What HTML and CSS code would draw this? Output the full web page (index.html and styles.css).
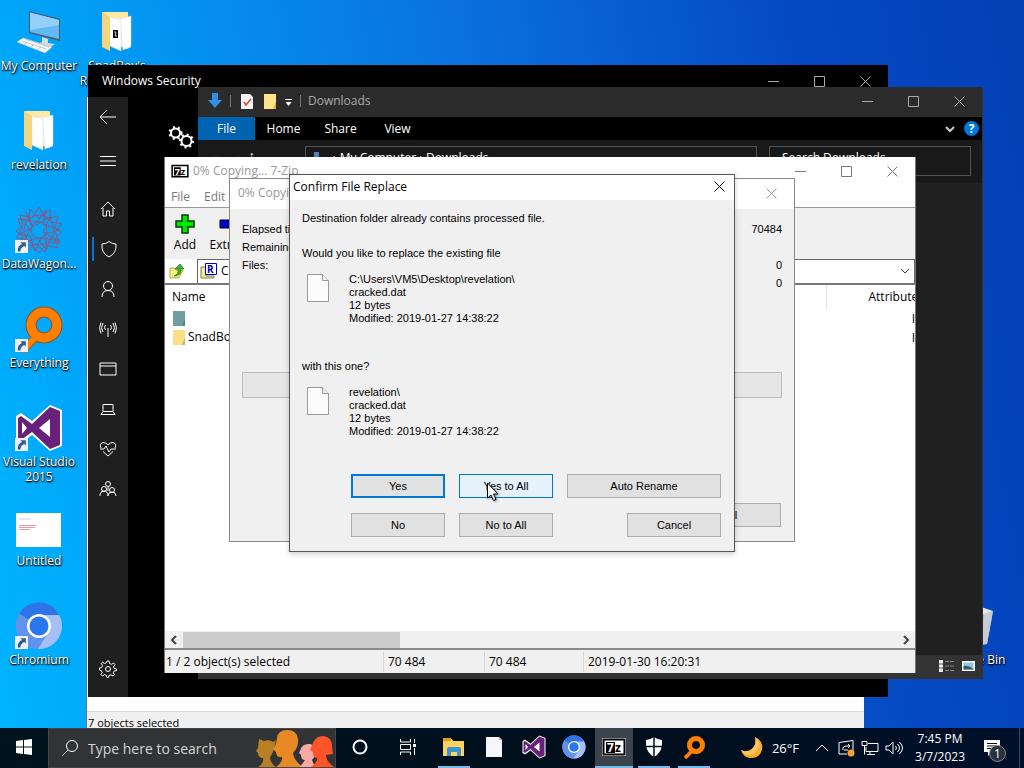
FILE: index.html
```html
<!DOCTYPE html>
<html lang="en">
<head>
  <meta charset="UTF-8">
  <title>Desktop</title>
  <link rel="stylesheet" href="styles.css">
</head>
<body>
  <!-- shared icons -->
  <svg class="defs" aria-hidden="true">
    <symbol id="folder" viewBox="0 0 48 48">
      <path d="M9 4h26v33H17z" fill="#ffe9a2"/>
      <path d="M23 10h15v29l-4 2-11-4z" fill="#f4f4f0"/>
      <path d="M27 11l11-3v30l-8 4z" fill="#fff" stroke="#d5dade" stroke-width=".5"/>
      <path d="M17 9l11 3v31l-11-5z" fill="#fff" stroke="#d5dade" stroke-width=".5"/>
      <path d="M9 4l8 5v34l-8-4z" fill="#f3d480"/>
    </symbol>
    <symbol id="chromium" viewBox="0 0 48 48">
      <circle cx="24" cy="24" r="23" fill="#9db8f4"/>
      <path d="M24 24L4 12A23 23 0 0 1 44 12.500z" fill="#2e74e6"/>
      <path d="M4 12A23 23 0 0 0 23 47L34 30 24 24z" fill="#5f93ee"/>
      <path d="M24 13h20A23 23 0 0 1 23 47l11-17z" fill="#a6bff6"/>
      <circle cx="24" cy="24" r="12" fill="#fff"/>
      <circle cx="24" cy="24" r="9.500" fill="#2877ee"/>
    </symbol>
    <symbol id="vs" viewBox="0 0 48 48">
      <path d="M35 1l12 5v36l-12 5-18-16-11 8-5-3V12l5-3 11 8z" fill="#fff"/>
      <path d="M35 3l10 4v34l-10 4-18-17L6 36l-3-2V14l3-2 11 8zM35 15L24 24l11 9zM7 18v12l5-6z" fill="#68217a" fill-rule="evenodd"/>
    </symbol>
    <symbol id="everything" viewBox="0 0 48 48">
      <path d="M20 32L6 46" stroke="#b85a08" stroke-width="8"/>
      <circle cx="28" cy="20" r="13" fill="none" stroke="#8a5420" stroke-width="11"/>
      <path d="M20 32L6 46" stroke="#ff8000" stroke-width="6"/>
      <circle cx="28" cy="20" r="13" fill="none" stroke="#ff8000" stroke-width="9"/>
    </symbol>
    <symbol id="sevenzip" viewBox="0 0 24 18">
      <path d="M0 0h24v18H0z" fill="#fff"/>
      <path d="M1.500 1.500h21v15h-21z" fill="#fff" stroke="#000" stroke-width="2"/>
      <path d="M4 4h9v11H4z"/>
      <text x="5" y="14" font-size="12" font-weight="bold" fill="#fff">7</text>
      <text x="13" y="14" font-size="12" font-weight="bold">z</text>
    </symbol>
    <symbol id="shortcut" viewBox="0 0 12 12">
      <path d="M0 0h12v12H0z" fill="#eef1f6"/>
      <path d="M5 2h5v5L8.500 5.500Q5 7 5 10.500H2.500Q2.500 5 6.500 3.700z" fill="#345a95"/>
    </symbol>
    <symbol id="file" viewBox="0 0 22 28">
      <path d="M.5.5h15l6 6v21H.5z" fill="#fcfcfc" stroke="#999"/>
      <path d="M15.500.5v6h6" fill="#f0f0f0" stroke="#999"/>
    </symbol>
    <symbol id="min" viewBox="0 0 11 11"><path d="M0 5.500h11" stroke="currentColor"/></symbol>
    <symbol id="max" viewBox="0 0 11 11"><path d="M.5.5h10v10H.5z" fill="none" stroke="currentColor"/></symbol>
    <symbol id="close" viewBox="0 0 11 11"><path d="M.5.5l10 10M10.500.5l-10 10" stroke="currentColor"/></symbol>
    <symbol id="smallfolder" viewBox="0 0 14 17">
      <path d="M1 1h12v15H1z" fill="currentColor"/><path d="M13 8v8h-3z" fill="#0003"/>
    </symbol>
  </svg>

  <main class="desktop">
    <div class="icons">
      <a class="icon" href="#">
        <svg viewBox="0 0 48 48">
          <path d="M14 3l31 8v22L14 25z" fill="#4a5a68"/>
          <path d="M15 4.500l29 7.500v19L15 24z" fill="#63b9f4"/>
          <path d="M15 4.500l29 7.500v5L15 22z" fill="#93d0fb"/>
          <path d="M27 29l6 2v4l7 1-6 4-11-4 4-2z" fill="#d3dde5"/>
          <path d="M8 30l29 9-7 6L2 34z" fill="#f4f6f8" stroke="#b8c6d0" stroke-width=".7"/>
          <path d="M7 33l24 8M11 31l23 8M12 34l-3 3M19 36l-3 3M26 39l-4 3" stroke="#a9b8c4" stroke-width=".7"/>
        </svg>
        <span>My Computer</span>
      </a>
      <a class="icon" href="#">
        <svg><use href="#folder"/></svg>
        <span>revelation</span>
      </a>
      <a class="icon" href="#">
        <svg viewBox="0 0 48 48">
          <g fill="none" stroke="#8f5580" stroke-width="1">
            <path d="M24 1l7 12 12-3-3 12 7 4-7 7 3 9-12-3-7 8-7-8-12 3 3-12-7-5 7-5-3-11 12 3z"/>
            <path d="M15 3l9 9 11-8 1 12 11 2-7 8 5 11-11-1-4 10-9-8-9 7-2-12-9-1 6-9-4-10 11 1z"/>
            <path d="M11 6l7 15 17-10-7 15 16 9-18-3-6 13-5-15-11-2 13-6zM31 4l-3 14 17 6-15 4 2 16-10-12-15 6 8-14L7 13l15 3z"/>
            <circle cx="24" cy="24" r="8"/><circle cx="24" cy="24" r="15"/>
          </g>
          <use href="#shortcut" y="34" width="13" height="13"/>
        </svg>
        <span>DataWagon...</span>
      </a>
      <a class="icon" href="#">
        <svg viewBox="0 0 48 48"><use href="#everything" x="1"/><use href="#shortcut" y="34" width="13" height="13"/></svg>
        <span>Everything</span>
      </a>
      <a class="icon" href="#">
        <svg viewBox="0 0 48 48"><use href="#vs"/><use href="#shortcut" y="34" width="13" height="13"/></svg>
        <span>Visual Studio 2015</span>
      </a>
      <a class="icon" href="#">
        <svg viewBox="0 0 48 48">
          <path d="M1 10h45v34H1z" fill="#fff"/>
          <path d="M4 16h12" stroke="#bccbe8" stroke-width=".8"/>
          <path d="M4 22.500h17M4 24.500h16M4 26.500h11" stroke="#e8808a" stroke-width=".8"/>
        </svg>
        <span>Untitled</span>
      </a>
      <a class="icon" href="#">
        <svg viewBox="0 0 48 48"><use href="#chromium"/><use href="#shortcut" y="34" width="13" height="13"/></svg>
        <span>Chromium</span>
      </a>
      <a class="icon" href="#">
        <svg viewBox="0 0 48 48">
          <use href="#folder"/><path d="M20 22h5v8h-5z"/><path d="M21 24h2l-1 4h2" stroke="#fff" fill="none" stroke-width=".8"/>
        </svg>
        <span>SnadBoy's Revelation v2</span>
      </a>
    </div>

    <a class="icon recycle" href="#">
      <svg viewBox="0 0 48 48">
        <path d="M6 6l37 3-6 33-25 1z" fill="#aeb8c6"/>
        <path d="M7 6l18-3 18 6-9 3z" fill="#e4e9ee"/>
        <path d="M34 12l9-3-6 33-5 1z" fill="#c6ccd4"/>
      </svg>
      <span>Recycle Bin</span>
    </a>

    <section class="window folder-window">
      <footer>7 objects selected</footer>
    </section>

    <section class="window security">
      <header class="titlebar">
        <span class="title">Windows Security</span>
        <button aria-label="Minimize"><svg><use href="#min"/></svg></button>
        <button aria-label="Maximize"><svg><use href="#max"/></svg></button>
        <button aria-label="Close"><svg><use href="#close"/></svg></button>
      </header>
      <div class="security-body">
        <nav>
          <button class="back" aria-label="Back"><svg viewBox="0 0 18 18"><path d="M17 9H1M8 2L1 9l7 7"/></svg></button>
          <button class="hamburger" aria-label="Menu"><svg viewBox="0 0 18 18"><path d="M1 4.500h16M1 9h16M1 13.500h16"/></svg></button>
          <button class="home" aria-label="Home"><svg viewBox="0 0 18 18"><path d="M2 9l7-7 7 7M4 7.500V16h3.500v-5h3v5H14V7.500"/></svg></button>
          <button class="current" aria-label="Virus protection"><svg viewBox="0 0 18 18"><path d="M9 1.500q3 2.500 7 2.500 1 9-7 13Q1 13 2 4q4 0 7-2.500z"/></svg></button>
          <button aria-label="Account"><svg viewBox="0 0 18 18"><circle cx="9" cy="6" r="4.500"/><path d="M3 17q0-6.500 6-6.500t6 6.500"/></svg></button>
          <button aria-label="Firewall"><svg viewBox="0 0 18 18"><path d="M9 8v9M6.500 10q-2-2.500 0-5M11.500 10q2-2.500 0-5M4 12q-3-4 0-9M14 12q3-4 0-9M2 13.500q-3-6 0-11M16 13.500q3-6 0-11"/></svg></button>
          <button aria-label="App control"><svg viewBox="0 0 18 18"><path d="M1 3h16v12H1zM1 6h16"/></svg></button>
          <button aria-label="Device security"><svg viewBox="0 0 18 18"><path d="M4 4.500h10v7H4zM4 11.500l-2 3h14l-2-3"/></svg></button>
          <button aria-label="Device health"><svg viewBox="0 0 18 18"><path d="M2 8Q0 3 4.500 2.500 7 2.500 9 5q2-2.500 4.500-2.500Q18 3 16 8M1 9h4l2-3 3 6 2-3h5M4 11.500L9 16l5-4.500"/></svg></button>
          <button aria-label="Family"><svg viewBox="0 0 18 18"><circle cx="9" cy="4" r="2.500"/><circle cx="5" cy="9" r="2.500"/><circle cx="13" cy="10" r="2.500"/><path d="M1 16q0-5 4-5t4 5M9 16q0-4 4-4t4 4M9 7v4"/></svg></button>
          <button class="settings" aria-label="Settings"><svg viewBox="0 0 18 18"><circle cx="9" cy="9" r="2.500"/><path d="M8 1h2l.5 2.500 2 .8L14.500 3 16 4.500 14.500 7l.8 1.500L17.500 9v1.500l-2.500.7-.7 1.500L15.500 15 14 16l-2-1.200-2 .7-.5 2H8l-.7-2.200-1.800-.7L3.500 16 2 14.500l1.200-2-.7-1.800L.5 10V8l2.200-.5.8-1.800L2.200 3.500 3.500 2.200 5.700 3.500l1.800-.8z"/></svg></button>
        </nav>
        <svg class="gears" viewBox="0 0 26 24">
          <circle cx="7.500" cy="8" r="4.500"/><circle cx="7.500" cy="8" r="6" class="teeth"/>
          <circle cx="18.500" cy="16" r="5"/><circle cx="18.500" cy="16" r="6.500" class="teeth"/>
        </svg>
      </div>
    </section>

    <section class="window downloads">
      <header class="titlebar">
        <svg class="quick" viewBox="0 0 104 18">
          <path d="M8 1h6v7h4l-7 8-7-8h4z" fill="#2f8fe0"/>
          <path d="M26.500 3v12M96.500 3v12" stroke="#777"/>
          <path d="M37 2h9l3 3v12H37z" fill="#f4f4f4"/><path d="M40 10l2 3 5-6" stroke="#d04a30" fill="none" stroke-width="1.500"/>
          <path d="M60 2h12v15H60z" fill="#ffe38a"/><path d="M72 10v7h-3z" fill="#d9b24c"/>
          <path d="M81 7.500h7" stroke="#fff"/><path d="M81.500 10h6l-3 4z" fill="#fff"/>
        </svg>
        <span class="title">Downloads</span>
        <button aria-label="Minimize"><svg><use href="#min"/></svg></button>
        <button aria-label="Maximize"><svg><use href="#max"/></svg></button>
        <button aria-label="Close"><svg><use href="#close"/></svg></button>
      </header>
      <nav class="tabs">
        <button class="selected">File</button>
        <button>Home</button>
        <button>Share</button>
        <button>View</button>
        <svg class="chevron" viewBox="0 0 10 10"><path d="M1 3l4 4 4-4"/></svg>
        <button class="help" aria-label="Help">?</button>
      </nav>
      <div class="address">
        <span class="arrows">←&nbsp; →&nbsp; ↑</span>
        <div class="path"><i></i>&rsaquo; My Computer &rsaquo; Downloads</div>
        <div class="find">Search Downloads</div>
      </div>
      <footer>
        <svg viewBox="0 0 40 16">
          <path d="M2 2h4v12H2z" fill="#eee"/><path d="M2 6h4M2 10h4" stroke="#555"/>
          <path d="M8 3.500h4M13 3.500h4M8 8h4M13 8h4M8 12.500h4M13 12.500h4" stroke="#888"/>
          <path d="M25 3h13v10H25z" fill="#fff"/><path d="M26.500 4.500h10v7h-10z" fill="#8fc4e8"/><path d="M26.500 8q4-1 10 3v.5h-10z" fill="#35604f"/>
        </svg>
      </footer>
    </section>

    <section class="window zip">
      <header class="titlebar">
        <svg class="logo"><use href="#sevenzip"/></svg>
        <span class="title">0% Copying... 7-Zip</span>
        <button aria-label="Minimize"><svg><use href="#min"/></svg></button>
        <button aria-label="Maximize"><svg><use href="#max"/></svg></button>
        <button aria-label="Close"><svg><use href="#close"/></svg></button>
      </header>
      <nav class="menu"><button>File</button><button>Edit</button></nav>
      <div class="toolbar">
        <button>
          <svg viewBox="0 0 22 22"><path d="M8 2h6v6h6v6h-6v6H8v-6H2V8h6z" fill="#00e800" stroke="#063a06" stroke-width="1.500"/></svg>
          Add
        </button>
        <button>
          <svg viewBox="0 0 22 22"><path d="M2 7h18v8H2z" fill="#0000d8" stroke="#000"/></svg>
          Extract
        </button>
      </div>
      <div class="location">
        <button aria-label="Up">
          <svg viewBox="0 0 16 16"><path d="M1 5h5l1 2h7l-4 8H1z" fill="#f7ef80" stroke="#998c30" stroke-width=".7"/><path d="M5 13q5-2 4-7H6l5-5 4 5h-3q1 7-7 7z" fill="#3fb02c" stroke="#1e641a" stroke-width=".6"/></svg>
        </button>
        <div class="combo">
          <svg viewBox="0 0 18 18"><path d="M1 5h5v9h8v2H1z" fill="#f7ef70" stroke="#777"/><path d="M5.500 1.500h11v11h-11z" fill="#fff" stroke="#0000c0"/><text x="7" y="11" font-size="10" font-weight="bold" fill="#0000c0">R</text></svg>
          <span>C:\</span>
          <svg class="chevron" viewBox="0 0 10 10"><path d="M1 3l4 4 4-4"/></svg>
        </div>
      </div>
      <table>
        <thead><tr><th>Name</th><th class="last">Attributes</th></tr></thead>
        <tbody>
          <tr><td><svg class="teal"><use href="#smallfolder"/></svg></td><td class="bar">I</td></tr>
          <tr><td><svg class="yellow"><use href="#smallfolder"/></svg>SnadBoy's</td><td class="bar">I</td></tr>
        </tbody>
      </table>
      <div class="scrollbar">
        <svg class="chevron" viewBox="0 0 10 10"><path d="M7 1L3 5l4 4"/></svg>
        <div class="track"><div class="thumb"></div></div>
        <svg class="chevron" viewBox="0 0 10 10"><path d="M3 1l4 4-4 4"/></svg>
      </div>
      <footer>
        <span>1 / 2 object(s) selected</span>
        <span>70 484</span>
        <span>70 484</span>
        <span>2019-01-30 16:20:31</span>
      </footer>
    </section>

    <section class="window progress">
      <header class="titlebar">
        <span class="title">0% Copying...</span>
        <button aria-label="Close"><svg><use href="#close"/></svg></button>
      </header>
      <dl>
        <dt>Elapsed time:</dt><dd>70484</dd>
        <dt>Remaining time:</dt><dd></dd>
        <dt>Files:</dt><dd>0</dd>
        <dt></dt><dd>0</dd>
      </dl>
      <div class="meter"></div>
      <div class="actions"><button>Cancel</button></div>
    </section>

    <section class="window confirm" role="dialog" aria-labelledby="confirm-title">
      <header class="titlebar">
        <span class="title" id="confirm-title">Confirm File Replace</span>
        <button aria-label="Close"><svg><use href="#close"/></svg></button>
      </header>
      <div class="message">
        <p>Destination folder already contains processed file.</p>
        <p>Would you like to replace the existing file</p>
        <div class="item">
          <svg><use href="#file"/></svg>
          <div>C:\Users\VM5\Desktop\revelation\<br>cracked.dat<br>12 bytes<br>Modified: 2019-01-27 14:38:22</div>
        </div>
        <p>with this one?</p>
        <div class="item">
          <svg><use href="#file"/></svg>
          <div>revelation\<br>cracked.dat<br>12 bytes<br>Modified: 2019-01-27 14:38:22</div>
        </div>
      </div>
      <div class="buttons">
        <button class="default">Yes</button>
        <button class="hovered">Yes to All</button>
        <button>Auto Rename</button>
        <button>No</button>
        <button>No to All</button>
        <button class="cancel">Cancel</button>
      </div>
    </section>

    <svg class="cursor" viewBox="0 0 16 20"><path d="M1.500 1v15l3.500-3 2.500 5.500 2.500-1-2.500-5.500H12z" fill="#fff" stroke="#000"/></svg>
  </main>

  <footer class="taskbar">
    <button class="start" aria-label="Start">
      <svg viewBox="0 0 16 16"><path d="M0 2l7-1v6.500H0zM8 1l8-1v7.500H8zM0 8.500h7V15l-7-1zM8 8.500h8V16l-8-1z" fill="#fff"/></svg>
    </button>
    <label class="search">
      <svg class="lens" viewBox="0 0 18 18"><circle cx="11" cy="7" r="5.500"/><path d="M7 11l-6 6"/></svg>
      <input type="text" placeholder="Type here to search" aria-label="Search">
      <svg class="people" viewBox="0 0 80 38">
        <path d="M4 10l5 2q6-2 9 1l3-2-2 9q-2 6-4 8 0 6 6 10H3q6-3 5-9-5 0-5-5l-2-2 2-3z" fill="#bb7f25"/>
        <path d="M22 9Q23 1 32 1q10 0 11 9 1 8-5 14 1 8 10 14H21q7-5 6-10-6 1-6-5l-3-3 3-5z" fill="#e78a25"/>
        <path d="M45 22q2-8 10-7 9 2 6 11l-4 5 3 7H45l5-7q-4 0-4-5l-2-2z" fill="#f8aaa5"/>
        <path d="M58 14Q61 7 68 7q9 1 9 10l1 8-7 1q0 6 8 12H56q7-5 6-9-4 0-4-6l-3-2z" fill="#ff5427"/>
      </svg>
    </label>
    <button class="system" aria-label="Cortana"><svg viewBox="0 0 24 24"><circle cx="12" cy="12" r="6.500" fill="none" stroke="#fff" stroke-width="2"/></svg></button>
    <button class="system" aria-label="Task View">
      <svg viewBox="0 0 24 24"><path d="M4.500 4v3h10V4M4.500 20v-3h10v3M4.500 9.500h10v5h-10zM18.500 4v4M18.500 13v7" fill="none" stroke="#fff"/><path d="M17 9h3v3h-3z" fill="#fff"/></svg>
    </button>
    <div class="apps">
      <button class="running" aria-label="File Explorer">
        <svg viewBox="0 0 24 24"><path d="M1 4h9l1 2h11v15H1z" fill="#ffd35c"/><path d="M1 3h8v3H1z" fill="#e39a24"/><path d="M5 14q0-2 2-2h10q2 0 2 2v7h-4v-4H9v4H5z" fill="#3b94d4"/></svg>
      </button>
      <button aria-label="Document"><svg viewBox="0 0 24 24"><path d="M4 2h13l3 3v17H4z" fill="#f4f6f8"/><path d="M17 2v3h3" fill="#b5bcc4"/></svg></button>
      <button aria-label="Visual Studio"><svg><use href="#vs"/></svg></button>
      <button aria-label="Chromium"><svg><use href="#chromium"/></svg></button>
      <button class="running active" aria-label="7-Zip"><svg><use href="#sevenzip"/></svg></button>
      <button class="running" aria-label="Windows Security">
        <svg viewBox="0 0 24 24"><path d="M12 2q4 3 8 3v5q-1 8-8 12-7-4-8-12V5q4 0 8-3z" fill="#fff"/><path d="M12 2v20M3 11.500h18" stroke="#00101c" stroke-width="1.500"/></svg>
      </button>
      <button class="running" aria-label="Everything"><svg><use href="#everything"/></svg></button>
    </div>

    <div class="tray">
      <svg class="moon" viewBox="0 0 24 24"><path d="M15 1q9 4 7 13-3 9-12 8-7-1-9-8 6 3 11-1 5-5 3-12z" fill="#f9a830"/><path d="M15 1q6 4 4 11-3 8-12 7-4-1-6-5 6 3 11-1 5-5 3-12z" fill="#ffc45a"/></svg>
      <span class="temp">26°F</span>
      <svg viewBox="0 0 18 18"><path d="M3 12l6-6 6 6"/></svg>
      <svg viewBox="0 0 18 18"><path d="M2 3.500l14-2V14M10 15H2V3.500M6 11q-1-4 4-4h3M11 5l2 2-2 2M7 11h4"/><circle cx="14" cy="14" r="3.500" class="dot"/></svg>
      <svg viewBox="0 0 18 18"><path d="M7 4.500h10v8H5V8M9 12.500v3M6 15.500h8M1 2.500h5v4H1zM3.500 6.500v9"/></svg>
      <svg viewBox="0 0 18 18"><path d="M1 7h3l4-4v12l-4-4H1zM10.500 7q2 2 0 4M12.500 5q4 4 0 8M14.500 3q6 6 0 12"/></svg>
      <time>7:45 PM<br>3/7/2023</time>
      <button class="notify" aria-label="Notifications">
        <svg viewBox="0 0 18 18"><path d="M1 1h16v12H9l-4 4v-4H1z" fill="#fff"/><path d="M4 4.500h10M4 7h10M4 9.500h7" stroke="#00101c"/></svg>
        <span class="badge">1</span>
      </button>
    </div>
  </footer>
</body>
</html>
```
FILE: styles.css
```css
* {
  box-sizing: border-box;
}

body {
  margin: 0;
  height: 100vh;
  display: flex;
  flex-direction: column;
  overflow: hidden;
  font-family: "Open Sans", "Noto Sans", sans-serif;
  font-size: 12px;
  line-height: 16px;
  color: #000;
}

button {
  padding: 0;
  border: 0;
  background: none;
  font: inherit;
  color: inherit;
}

svg {
  flex: none;
}

.defs {
  position: absolute;
  width: 0;
  height: 0;
}

.desktop {
  position: relative;
  flex: 1;
  overflow: hidden;
  background: linear-gradient(80deg, #00b4ff 0%, #00a8fb 10%, #0a72de 50%, #0549c2 80%, #0340b6 100%);
}

/* desktop icons */
.icons {
  display: grid;
  grid-auto-flow: column;
  grid-template-rows: repeat(7, 99px);
  grid-auto-columns: 78px;
  justify-content: start;
}

.icon {
  width: 78px;
  padding-top: 8px;
  display: flex;
  flex-direction: column;
  align-items: center;
  gap: 2px;
  color: #fff;
  text-align: center;
  text-decoration: none;
  line-height: 15px;
  text-shadow: 1px 1px 2px #000, 0 1px 1px #000;
}

.icon svg {
  width: 48px;
  height: 48px;
}

.recycle {
  position: absolute;
  left: 935px;
  top: 594px;
}

/* windows */
.window {
  position: absolute;
  display: flex;
  flex-direction: column;
}

.titlebar {
  display: flex;
  align-items: center;
  height: 28px;
}

.titlebar .title {
  flex: 1;
}

.titlebar button {
  width: 46px;
  height: 28px;
  display: flex;
  align-items: center;
  justify-content: center;
}

.titlebar button svg {
  width: 11px;
  height: 11px;
}

.chevron {
  width: 10px;
  height: 10px;
  fill: none;
  stroke: #444;
}

.folder-window {
  left: 86px;
  top: 97px;
  width: 778px;
  bottom: 0;
  justify-content: flex-end;
  background: #fff;
  border-left: 1px solid #678;
}

.folder-window footer {
  height: 17px;
  padding: 3px 1px;
  background: #f0f0f0;
  border-top: 1px solid #d8d8d8;
  font-size: 11px;
}

.security {
  left: 88px;
  top: 65px;
  width: 800px;
  height: 632px;
  background: #000;
  color: #fff;
}

.security .titlebar {
  height: 32px;
  padding-left: 14px;
}

.security .titlebar button {
  color: #aaa;
}

.security-body {
  flex: 1;
  display: flex;
}

.security nav {
  width: 40px;
  display: flex;
  flex-direction: column;
  background: #1f1f1f;
}

.security nav button {
  height: 40px;
  display: flex;
  align-items: center;
  justify-content: center;
}

.security nav .hamburger {
  height: 48px;
}

.security nav .home {
  margin-top: 4px;
}

.security nav .current {
  height: 24px;
  margin: 8px 0 8px 4px;
  padding-right: 4px;
  border-left: 2px solid #0078d7;
}

.security nav .settings {
  margin-top: auto;
  margin-bottom: 8px;
}

.security nav svg {
  width: 18px;
  height: 18px;
  fill: none;
  stroke: #fff;
}

.gears {
  width: 26px;
  height: 24px;
  margin: 28px 0 0 40px;
  fill: none;
  stroke: #fff;
  stroke-width: 2;
}

.gears .teeth {
  stroke-width: 2;
  stroke-dasharray: 2 3;
}

.downloads {
  left: 198px;
  top: 87px;
  width: 785px;
  height: 592px;
  background: #202020;
  color: #fff;
  border-right: 1px solid #333;
  border-bottom: 2px solid #333;
}

.downloads .titlebar {
  height: 30px;
  padding-bottom: 2px;
  background: #2b2b2b;
  color: #aaa;
}

.quick {
  width: 104px;
  height: 18px;
  margin-left: 6px;
}

.tabs {
  height: 23px;
  display: flex;
  align-items: center;
  background: #000;
}

.tabs button {
  height: 23px;
  width: 57px;
}

.tabs .selected {
  background: #0063b1;
}

.tabs .chevron {
  margin-left: auto;
  stroke: #ccc;
  stroke-width: 2;
}

.tabs .help {
  width: 15px;
  height: 15px;
  margin: 0 3px 0 9px;
  border-radius: 50%;
  background: #0078d7;
  line-height: 15px;
  font-weight: bold;
}

.address {
  height: 43px;
  padding: 6px 11px 7px 14px;
  display: flex;
  gap: 12px;
  background: #191919;
}

.arrows {
  width: 81px;
  padding-top: 2px;
}

.path,
.find {
  border: 1px solid #535353;
  padding: 3px 12px;
}

.path {
  flex: 1;
  display: flex;
  gap: 14px;
}

.path i {
  width: 5px;
  height: 12px;
  margin: 2px 0 0 -4px;
  background: #4a84c0;
}

.find {
  width: 202px;
}

.downloads footer {
  height: 22px;
  margin-top: auto;
  display: flex;
  align-items: center;
  justify-content: flex-end;
  padding-right: 5px;
  background: #333;
}

.downloads footer svg {
  width: 40px;
  height: 16px;
}

.zip {
  left: 164px;
  top: 157px;
  width: 752px;
  height: 516px;
  background: #fff;
  border-left: 1px solid #777;
  border-right: 1px solid #777;
}

.zip .titlebar {
  padding-left: 6px;
  color: #999;
}

.zip .titlebar button {
  color: #777;
}

.logo {
  width: 18px;
  height: 14px;
  margin-right: 4px;
}

.menu {
  height: 23px;
  display: flex;
  gap: 14px;
  padding: 2px 0 0 6px;
  border-bottom: 1px solid #999;
  color: #777;
}

.toolbar {
  height: 51px;
  display: flex;
  background: #f0f0f0;
}

.toolbar button {
  width: 40px;
  display: flex;
  flex-direction: column;
  align-items: center;
}

.toolbar button + button {
  margin-left: 4px;
}

.toolbar svg {
  width: 22px;
  height: 22px;
  margin: 5px 0 2px;
}

.location {
  height: 26px;
  display: flex;
  border-bottom: 2px solid #777;
}

.location button {
  width: 32px;
  padding: 4px 0 0 4px;
  text-align: left;
}

.location button svg {
  width: 16px;
  height: 16px;
}

.combo {
  flex: 1;
  display: flex;
  align-items: center;
  gap: 3px;
  padding: 0 4px 2px 2px;
  border: 1px solid #666;
  border-bottom: 0;
}

.combo svg:first-child {
  width: 18px;
  height: 18px;
}

.combo .chevron {
  margin-left: auto;
}

.zip table {
  width: 100%;
  border-collapse: collapse;
}

.zip th,
.zip td {
  height: 19px;
  padding: 0 0 0 7px;
  text-align: left;
  font-weight: normal;
  white-space: nowrap;
}

.zip thead th {
  height: 24px;
}

.zip .last {
  width: 89px;
  max-width: 89px;
  padding-left: 42px;
  overflow: hidden;
  border-left: 1px solid #e5e5e5;
}

.zip .bar {
  padding: 0;
  text-align: right;
}

.zip td svg {
  width: 14px;
  height: 17px;
  margin-right: 2px;
  vertical-align: middle;
}

.teal {
  color: #6f9fa3;
}

.yellow {
  color: #fbe083;
}

.scrollbar {
  height: 17px;
  margin-top: auto;
  display: flex;
  align-items: center;
  gap: 4px;
  padding: 0 4px;
  background: #f0f0f0;
}

.scrollbar .chevron {
  stroke-width: 2;
}

.track {
  flex: 1;
}

.thumb {
  width: 217px;
  height: 16px;
  background: #cdcdcd;
}

.zip footer {
  height: 25px;
  display: grid;
  grid-template-columns: 218px 101px 99px 1fr;
  padding-top: 2px;
  border-top: 2px solid #888;
  background: #f0f0f0;
}

.zip footer span {
  height: 20px;
  padding: 2px 0 0 4px;
  border-left: 1px solid #d5d5d5;
}

.zip footer span:first-child {
  padding-left: 1px;
  border: 0;
}

.progress {
  left: 229px;
  top: 178px;
  width: 566px;
  height: 364px;
  background: #f0f0f0;
  border: 1px solid #888;
  font-family: "Liberation Sans", Arial, sans-serif;
  font-size: 11px;
}

.progress .titlebar,
.confirm .titlebar {
  padding-left: 8px;
  background: #fff;
  font-family: "Open Sans", "Noto Sans", sans-serif;
  font-size: 12px;
}

.progress .titlebar {
  height: 30px;
  padding-bottom: 2px;
  color: #999;
}

.progress dl {
  margin: 11px 12px 0;
  display: grid;
  grid-template-columns: 1fr auto;
  grid-auto-rows: 18px;
  line-height: 18px;
}

.progress dd {
  margin: 0;
  text-align: right;
}

.meter {
  height: 26px;
  margin: 80px 12px 0;
  border: 1px solid #bcbcbc;
  background: #e6e6e6;
}

.actions {
  margin: auto 13px 14px;
  text-align: right;
}

.actions button,
.buttons button {
  height: 24px;
  border: 1px solid #adadad;
  background: #e1e1e1;
}

.actions button {
  width: 122px;
}

.confirm {
  left: 289px;
  top: 174px;
  width: 446px;
  height: 378px;
  background: #f0f0f0;
  border: 1px solid #555;
  box-shadow: 0 2px 6px #0003;
  font-family: "Liberation Sans", Arial, sans-serif;
  font-size: 11px;
  line-height: 13px;
}

.confirm .titlebar {
  height: 25px;
  padding: 0 0 2px 3px;
}

.confirm .titlebar button {
  width: 30px;
  height: 23px;
}

.message {
  padding: 12px 12px 0;
}

.message p {
  margin: 0 0 22px;
}

.item {
  display: flex;
  gap: 20px;
  margin: -9px 0 35px 5px;
}

.item svg {
  width: 22px;
  height: 28px;
  margin-top: 1px;
}

.buttons {
  margin: auto 13px 14px 61px;
  display: grid;
  grid-template-columns: 94px 94px 1fr;
  gap: 15px 14px;
}

.buttons .default {
  border: 2px solid #0078d7;
}

.buttons .hovered {
  border-color: #0078d7;
  background: #e5f1fb;
}

.buttons .cancel {
  width: 94px;
  justify-self: end;
}

.cursor {
  position: absolute;
  left: 486px;
  top: 482px;
  width: 16px;
  height: 20px;
  filter: drop-shadow(1px 1px 1px #0006);
}

/* taskbar */
.taskbar {
  height: 40px;
  display: flex;
  background: linear-gradient(90deg, #00141e, #000e1c 60%, #00102a);
  color: #fff;
}

.apps {
  display: flex;
  margin-left: 2px;
}

.taskbar > button,
.apps button {
  width: 40px;
  display: flex;
  align-items: center;
  justify-content: center;
  border-bottom: 2px solid transparent;
}

.taskbar > button svg,
.apps svg {
  width: 24px;
  height: 24px;
}

.taskbar .start,
.taskbar .system {
  width: 48px;
}

.taskbar .start svg {
  width: 16px;
  height: 16px;
}

.apps .running {
  width: 32px;
  margin: 0 4px;
  border-bottom-color: #76b9ed;
}

.apps .active {
  width: 38px;
  margin: 0 1px;
  background: #3b444c;
}

.search {
  width: 288px;
  display: flex;
  align-items: center;
  padding-left: 12px;
  background: #323334;
  border: 1px solid #454647;
}

.lens {
  width: 18px;
  height: 18px;
  fill: none;
  stroke: #fff;
}

.search input {
  width: 100px;
  flex: 1;
  padding: 0 0 0 9px;
  border: 0;
  outline: 0;
  background: none;
  color: #fff;
  font: 14px "Open Sans", "Noto Sans", sans-serif;
}

.search input::placeholder {
  color: #d5d5d5;
  opacity: 1;
}

.people {
  width: 80px;
  height: 38px;
}

.tray {
  margin-left: auto;
  margin-right: 4px;
  display: flex;
  align-items: center;
  gap: 6px;
  border-right: 1px solid #3b4654;
}

.tray > svg {
  width: 18px;
  height: 18px;
  fill: none;
  stroke: #fff;
}

.tray .moon {
  width: 24px;
  height: 24px;
  stroke: none;
}

.tray .dot {
  fill: #f9a030;
  stroke: none;
}

.temp {
  font-size: 13px;
  margin: 0 8px 0 2px;
}

.tray time {
  margin-left: 6px;
  text-align: center;
  line-height: 18px;
}

.notify {
  position: relative;
  width: 18px;
  height: 18px;
  margin: 0 18px 0 12px;
}

.notify svg {
  width: 18px;
  height: 18px;
}

.badge {
  position: absolute;
  left: 6px;
  top: 6px;
  width: 17px;
  height: 17px;
  border: 1px solid #889;
  border-radius: 50%;
  background: #2a323c;
  line-height: 15px;
}
```
